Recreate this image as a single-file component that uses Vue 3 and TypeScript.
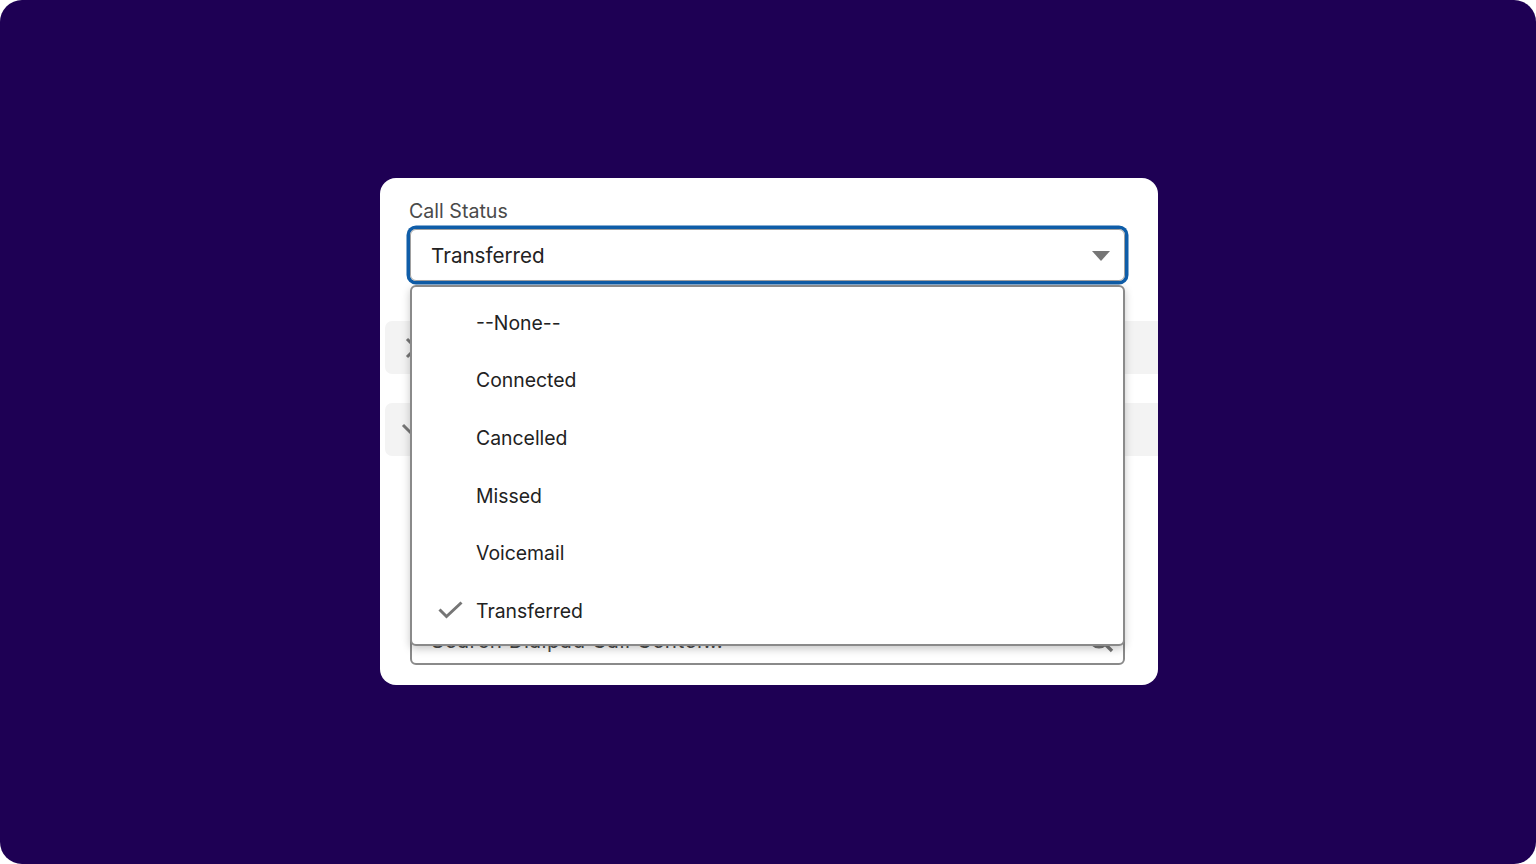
<script setup lang="ts">
const options: string[] = ['--None--', 'Connected', 'Cancelled', 'Missed', 'Voicemail', 'Transferred']
const selected = 'Transferred'
</script>

<template>
  <div class="page">
    <main class="card">
      <label class="label">Call Status</label>
      <div class="field">
        <div class="select">
          <span>{{ selected }}</span>
          <svg class="caret" width="18" height="10" viewBox="0 0 18 10"><path d="M0 0H18L9 10Z" fill="#767676" /></svg>
        </div>
        <ul class="menu">
          <li v-for="o in options" :key="o" class="option">
            <svg v-if="o === selected" class="check" width="25" height="18" viewBox="0 0 25 18">
              <path d="M1.5 8.5L8.5 15.5L23.5 1.5" fill="none" stroke="#767676" stroke-width="3" />
            </svg>
            <span>{{ o }}</span>
          </li>
        </ul>
      </div>
      <div class="bar bar-first">
        <svg class="chev" width="14" height="22" viewBox="0 0 14 22"><path d="M2 2L11 11L2 20" fill="none" stroke="#767676" stroke-width="3" /></svg>
      </div>
      <div class="bar bar-second">
        <svg class="chev chev-down" width="22" height="14" viewBox="0 0 22 14"><path d="M2 2L11 11L20 2" fill="none" stroke="#767676" stroke-width="3" /></svg>
      </div>
      <div class="search">
        <span class="placeholder">Search Dialpad Call Center...</span>
        <svg class="glass" width="26" height="26" viewBox="0 0 26 26">
          <circle cx="11" cy="10" r="9" fill="none" stroke="#767676" stroke-width="3" />
          <path d="M17 16L24 23" fill="none" stroke="#767676" stroke-width="3.4" />
        </svg>
      </div>
    </main>
  </div>
</template>

<style>
html, body { margin: 0; background: #fff; }
</style>

<style scoped>
.page {
  width: 1536px;
  height: 864px;
  box-sizing: border-box;
  padding: 0 0 1px 2px;
  background: #1e0054;
  border-radius: 22px;
  display: flex;
  align-items: center;
  justify-content: center;
  font-family: Inter, "Liberation Sans", sans-serif;
  color: #222;
  overflow: hidden;
}
.card {
  width: 778px;
  height: 507px;
  box-sizing: border-box;
  background: #fff;
  border-radius: 16px;
  padding-top: 22px;
  overflow: hidden;
  display: flex;
  flex-direction: column;
}
.label {
  margin-left: 29px;
  height: 22px;
  line-height: 23px;
  font-size: 19.6px;
  color: #4a4a4a;
}
.field {
  position: relative;
  margin: 7px 33px 0 30px;
}
.select {
  height: 52px;
  box-sizing: border-box;
  padding: 0 14px 0 20px;
  border: 1px solid #a0a0a0;
  border-radius: 6px;
  box-shadow: 0 0 0 3.5px #0f5da8;
  display: flex;
  align-items: center;
  justify-content: space-between;
  font-size: 20.6px;
}
.caret { margin-top: 1px; }
.menu {
  position: absolute;
  z-index: 2;
  top: 56px;
  left: 0;
  right: 0;
  height: 361px;
  box-sizing: border-box;
  margin: 0;
  padding: 7px 0 0;
  list-style: none;
  background: #fff;
  border: 2px solid #8a8a8a;
  border-radius: 6px;
  box-shadow: 0 3px 9px rgba(0, 0, 0, 0.22);
}
.option {
  position: relative;
  height: 57.6px;
  padding-left: 64px;
  display: flex;
  align-items: center;
  font-size: 19.4px;
}
.check {
  position: absolute;
  left: 26px;
  top: 19px;
}
.bar {
  margin-left: 5px;
  height: 53px;
  background: #f3f3f3;
  border-radius: 7px 0 0 7px;
  display: flex;
  align-items: center;
}
.bar-first { margin-top: 40px; }
.bar-second { margin-top: 29px; }
.chev { margin-left: 20px; }
.chev-down { margin-left: 16px; }
.search {
  margin: 161px 33px 0 30px;
  height: 48px;
  box-sizing: border-box;
  padding: 0 9px 0 19px;
  border: 2px solid #8a8a8a;
  border-radius: 6px;
  display: flex;
  align-items: center;
  justify-content: space-between;
  font-size: 20.6px;
  letter-spacing: 0.5px;
  color: #4a4a4a;
}
.placeholder { margin-top: -2px; }
</style>
